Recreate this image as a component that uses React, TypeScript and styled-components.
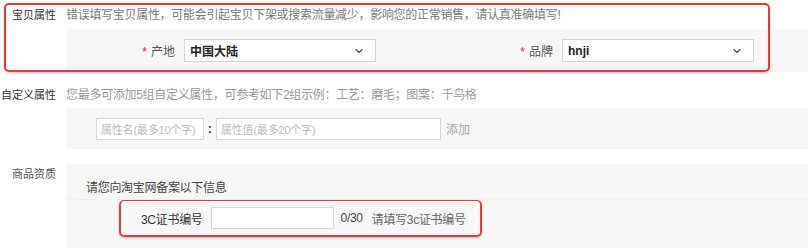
import React from "react";
import styled, { createGlobalStyle } from "styled-components";
import { ChevronDown } from "lucide-react";

const GlobalStyle = createGlobalStyle`
  body {
    margin: 0;
    background: #fff;
    font-family: "Liberation Sans", "Noto Sans CJK SC", sans-serif;
    font-size: 12px;
    color: #333;
  }
`;

const Page = styled.div`
  width: 808px;
  height: 248px;
  overflow: hidden;
`;

interface SectionProps {
  top?: number;
  height?: number;
}
const Section = styled.div<SectionProps>`
  position: relative;
  display: flex;
  margin-top: ${(p) => p.top || 0}px;
  height: ${(p) => (p.height ? `${p.height}px` : "auto")};
`;

interface LabelProps {
  offset?: number;
  tone?: string;
}
const Label = styled.div<LabelProps>`
  width: 56px;
  flex: none;
  text-align: right;
  font-size: 11px;
  line-height: 14px;
  white-space: nowrap;
  padding-top: ${(p) => p.offset || 0}px;
  color: ${(p) => p.tone || "#333"};
`;

const Content = styled.div`
  flex: 1;
  padding-left: 10px;
  display: flex;
  flex-direction: column;
`;

interface HintProps {
  offset?: number;
  tone?: string;
}
const Hint = styled.div<HintProps>`
  line-height: 14px;
  letter-spacing: -0.3px;
  padding-top: ${(p) => p.offset || 0}px;
  color: ${(p) => p.tone || "#888"};
  white-space: nowrap;
`;

interface PanelProps {
  gap?: number;
  height: number;
}
const Panel = styled.div<PanelProps>`
  margin-top: ${(p) => p.gap || 0}px;
  height: ${(p) => p.height}px;
  background: #f7f7f7;
  display: flex;
  align-items: center;
`;

const Annotation = styled.div`
  position: absolute;
  left: 4px;
  top: 3px;
  width: 766px;
  height: 69px;
  box-sizing: border-box;
  border: 2px solid #e23b3d;
  border-radius: 5px;
  box-shadow: 0 1px 2px rgba(120, 0, 0, 0.25);
  pointer-events: none;
`;

interface FieldLabelProps {
  width: number;
}
const FieldLabel = styled.div<FieldLabelProps>`
  width: ${(p) => p.width}px;
  flex: none;
  text-align: right;
  padding-right: 9px;
  box-sizing: border-box;
  color: #555;
  white-space: nowrap;

  span {
    color: #e8262c;
    margin-right: 4px;
  }
`;

const Select = styled.div`
  width: 192px;
  height: 23px;
  box-sizing: border-box;
  background: #fff;
  border: 1px solid #d6d6d6;
  display: flex;
  align-items: center;
  justify-content: space-between;
  padding: 0 10px 0 5px;
  color: #222;
  font-weight: bold;
  flex: none;
`;

interface BoxProps {
  width: number;
}
const Box = styled.div<BoxProps>`
  width: ${(p) => p.width}px;
  height: 22px;
  box-sizing: border-box;
  background: #fff;
  border: 1px solid #d8d8d8;
  display: flex;
  align-items: center;
  padding: 0 4px;
  font-size: 11px;
  letter-spacing: -0.2px;
  color: #bbb;
  flex: none;
  white-space: nowrap;
  overflow: hidden;
`;

const Spacer = styled.div`
  width: 30px;
  flex: none;
`;

const Colon = styled.div`
  width: 12px;
  text-align: center;
  color: #333;
  font-weight: bold;
`;

const AddLink = styled.div`
  margin-left: 5px;
  color: #aaa;
`;

const QualPanel = styled.div`
  flex: 1;
  background: #f7f7f7;
  display: flex;
  flex-direction: column;
`;

const QualHead = styled.div`
  height: 36px;
  box-sizing: border-box;
  padding: 17px 0 0 20px;
  line-height: 14px;
  letter-spacing: -0.3px;
  color: #444;
  border-bottom: 1px solid #efefef;
`;

const CertRow = styled.div`
  align-self: flex-start;
  margin-left: 53px;
  height: 37px;
  box-sizing: border-box;
  border: 2px solid #e23b3d;
  border-top-width: 1px;
  border-radius: 5px;
  box-shadow: 0 1px 2px rgba(120, 0, 0, 0.25);
  display: flex;
  align-items: center;
  padding: 0 14px 0 20px;
  white-space: nowrap;
  letter-spacing: -0.3px;
`;

const CertLabel = styled.div`
  color: #333;
  margin-right: 8px;
`;

const Counter = styled.div`
  margin-left: 7px;
  color: #444;
`;

const CertTip = styled.div`
  margin-left: 9px;
  color: #666;
`;

const App = () => (
  <>
    <GlobalStyle />
    <Page>
      <Section height={72}>
        <Label offset={8}>宝贝属性</Label>
        <Content>
          <Hint offset={8} tone="#7a7a7a">
            错误填写宝贝属性，可能会引起宝贝下架或搜索流量减少，影响您的正常销售，请认真准确填写!
          </Hint>
          <Panel gap={7} height={43}>
            <FieldLabel width={118}>
              <span>*</span>产地
            </FieldLabel>
            <Select>
              中国大陆
              <ChevronDown size={12} strokeWidth={2.5} color="#555" />
            </Select>
            <FieldLabel width={186}>
              <span>*</span>品牌
            </FieldLabel>
            <Select>
              hnji
              <ChevronDown size={12} strokeWidth={2.5} color="#555" />
            </Select>
          </Panel>
        </Content>
        <Annotation />
      </Section>

      <Section height={77}>
        <Label offset={16}>自定义属性</Label>
        <Content>
          <Hint offset={16} tone="#999">
            您最多可添加5组自定义属性，可参考如下2组示例：工艺：磨毛；图案：千鸟格
          </Hint>
          <Panel gap={6} height={41}>
            <Spacer />
            <Box width={108}>属性名(最多10个字)</Box>
            <Colon>:</Colon>
            <Box width={225}>属性值(最多20个字)</Box>
            <AddLink>添加</AddLink>
          </Panel>
        </Content>
      </Section>

      <Section top={15} height={84}>
        <Label offset={3} tone="#555">
          商品资质
        </Label>
        <Content>
          <QualPanel>
            <QualHead>请您向淘宝网备案以下信息</QualHead>
            <CertRow>
              <CertLabel>3C证书编号</CertLabel>
              <Box width={123} />
              <Counter>0/30</Counter>
              <CertTip>请填写3c证书编号</CertTip>
            </CertRow>
          </QualPanel>
        </Content>
      </Section>
    </Page>
  </>
);

export default App;
